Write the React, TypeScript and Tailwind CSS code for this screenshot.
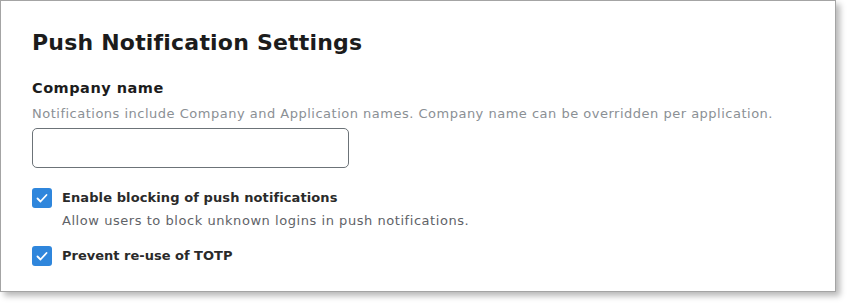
import React from "react";

const Check = () => (
  <span className="flex h-5 w-5 shrink-0 items-center justify-center rounded-[3px] bg-[#2f86dc]">
    <svg viewBox="0 0 20 20" className="h-5 w-5" fill="none">
      <path d="M5.5 10.5l3 3 6-6.5" stroke="#fff" strokeWidth="1.8" strokeLinecap="round" strokeLinejoin="round" />
    </svg>
  </span>
);

export default function App() {
  return (
    <div className="h-[307px] w-[851px] bg-white" style={{ fontFamily: "'DejaVu Sans', sans-serif" }}>
      <div className="h-[292px] w-[836px] border border-[#a4a4a4] bg-white px-[31px] pt-[27px] shadow-[4px_4px_6px_rgba(0,0,0,0.28)]">
        <h1 className="text-[22px] font-bold leading-[30px] tracking-[0.2px] text-[#1c1c1c]">Push Notification Settings</h1>

        <div className="mt-[20px]">
          <div className="text-[14.5px] font-bold leading-[20px] tracking-[0.5px] text-[#1c1c1c]">Company name</div>
          <div className="mt-[7px] text-[13px] leading-[18px] tracking-[0.5px] text-[#8b9095]">
            Notifications include Company and Application names. Company name can be overridden per application.
          </div>
          <input
            type="text"
            className="mt-[5px] block h-[40px] w-[317px] rounded-[5px] border border-[#6c7378] bg-white outline-none"
          />
        </div>

        <div className="mt-[20px] flex gap-[10px]">
          <Check />
          <div>
            <div className="text-[13px] font-bold leading-[20px] tracking-[0.1px] text-[#2a2a2a]">Enable blocking of push notifications</div>
            <div className="mt-[4px] text-[13px] leading-[18px] tracking-[0.55px] text-[#5f6368]">
              Allow users to block unknown logins in push notifications.
            </div>
          </div>
        </div>

        <div className="mt-[16px] flex gap-[10px]">
          <Check />
          <div className="text-[13px] font-bold leading-[20px] text-[#2a2a2a]">Prevent re-use of TOTP</div>
        </div>
      </div>
    </div>
  );
}
